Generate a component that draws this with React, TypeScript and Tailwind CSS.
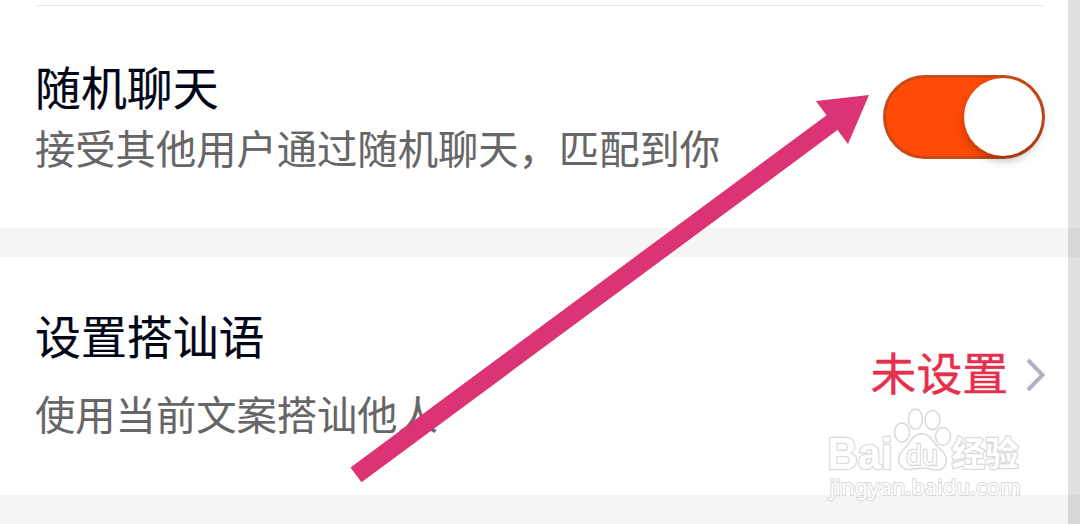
import React, { useState } from 'react';

interface RowProps {
  title: string;
  description: string;
  className: string;
  titleClass: string;
  children: React.ReactNode;
}

const SettingRow: React.FC<RowProps> = ({ title, description, className, titleClass, children }) => (
  <section className={`flex justify-between bg-white pl-[35px] pr-[35px] ${className}`}>
    <div className="whitespace-nowrap">
      <h2 className={`text-[45.9px] leading-[60px] text-[#020617] [-webkit-text-stroke:0.2px_#020617] ${titleClass}`}>{title}</h2>
      <p className="text-[40.3px] leading-[54px] text-[#666666] [-webkit-text-stroke:0.1px_#666666]">{description}</p>
    </div>
    {children}
  </section>
);

const Toggle: React.FC<{ checked: boolean; onChange: (v: boolean) => void }> = ({ checked, onChange }) => (
  <button
    role="switch"
    aria-checked={checked}
    onClick={() => onChange(!checked)}
    className={`flex h-[84px] w-[162px] items-center rounded-full border-[3px] ${
      checked ? 'justify-end border-[#c94a18] bg-[#ff4a08]' : 'justify-start border-gray-300 bg-gray-200'
    }`}
  >
    <span className="h-[78px] w-[78px] rounded-full bg-white shadow-[0_5px_8px_rgba(0,0,0,0.25)]" />
  </button>
);

const Chevron = () => (
  <svg width="20" height="36" viewBox="0 0 20 36" fill="none" stroke="#b0b3bf" strokeWidth="4">
    <path d="M3 3L17.5 18L3 33" />
  </svg>
);

const Arrow = () => (
  <svg className="pointer-events-none absolute left-0 top-0" width="1080" height="524" viewBox="0 0 1080 524">
    <path
      d="M350.5 467.5L826.5 115.2L816 101L869 95L848 144L837.5 130L361.5 482.3Z"
      fill="#dc3374"
    />
  </svg>
);

const Watermark = () => (
  <svg
    className="pointer-events-none absolute left-[820px] top-[400px]"
    width="210"
    height="110"
    viewBox="0 0 210 110"
    fill="#ffffff"
    stroke="#d9d9d9"
    strokeLinejoin="round"
  >
    <g strokeWidth="1.5">
      <ellipse cx="82" cy="32.5" rx="7.5" ry="9.5" />
      <ellipse cx="95.5" cy="19" rx="7" ry="10" />
      <ellipse cx="112.5" cy="20" rx="7.5" ry="9.5" />
      <ellipse cx="123" cy="36.5" rx="7.5" ry="9" />
      <path d="M102 33.5C94 34 91 40 88 44.5C84 49 78.5 53 78.5 59.5C79 67 84 70 90 69.5C97 68.5 104 67.5 110 69C117 71 124 70.5 126 63C127.5 57 125 53 120 49C114 44 111 34 102 33.5Z" />
    </g>
    <g className="[paint-order:stroke]">
      <text x="7.5" y="68.5" fontSize="44" fontWeight="700" strokeWidth="2.5" textLength="65" lengthAdjust="spacingAndGlyphs" className="font-['Liberation_Sans']">Bai</text>
      <text x="86" y="64.5" fontSize="27" strokeWidth="2.5" textLength="32" lengthAdjust="spacingAndGlyphs" className="font-['Open_Sans']">du</text>
      <text x="131.5" y="66" fontSize="34" fontWeight="700" strokeWidth="2.5" textLength="67" lengthAdjust="spacingAndGlyphs" className="font-['Noto_Sans_CJK_SC']">经验</text>
      <text x="9.5" y="94.5" fontSize="22.5" strokeWidth="2" textLength="191" lengthAdjust="spacingAndGlyphs" className="font-['Noto_Sans']">jingyan.baidu.com</text>
    </g>
  </svg>
);

export default function App() {
  const [randomChat, setRandomChat] = useState(true);

  return (
    <main className="relative h-[524px] w-[1080px] overflow-hidden bg-[#f5f5f5] font-['Noto_Sans_CJK_SC',sans-serif]">
      <div className="bg-white px-[35px] pt-[5px]">
        <div className="h-px bg-[#e9e9e9]" />
      </div>
      <SettingRow title="随机聊天" description="接受其他用户通过随机聊天，匹配到你" className="h-[222px] pt-[49px]" titleClass="mb-[5px]">
        <div className="pt-[20px]">
          <Toggle checked={randomChat} onChange={setRandomChat} />
        </div>
      </SettingRow>
      <SettingRow title="设置搭讪语" description="使用当前文案搭讪他人" className="mt-[29px] h-[238px] pt-[47px]" titleClass="mb-[22px]">
        <div className="flex h-[142px] items-center gap-[17px]">
          <span className="mb-[8px] text-[45.8px] leading-[60px] text-[#e52f4b] [-webkit-text-stroke:0.4px_#e52f4b]">未设置</span>
          <Chevron />
        </div>
      </SettingRow>
      <Arrow />
      <Watermark />
      {/* scrollbar track, tints whatever is below it */}
      <div className="absolute right-0 top-0 h-full w-[12px] bg-black/12" />
    </main>
  );
}
